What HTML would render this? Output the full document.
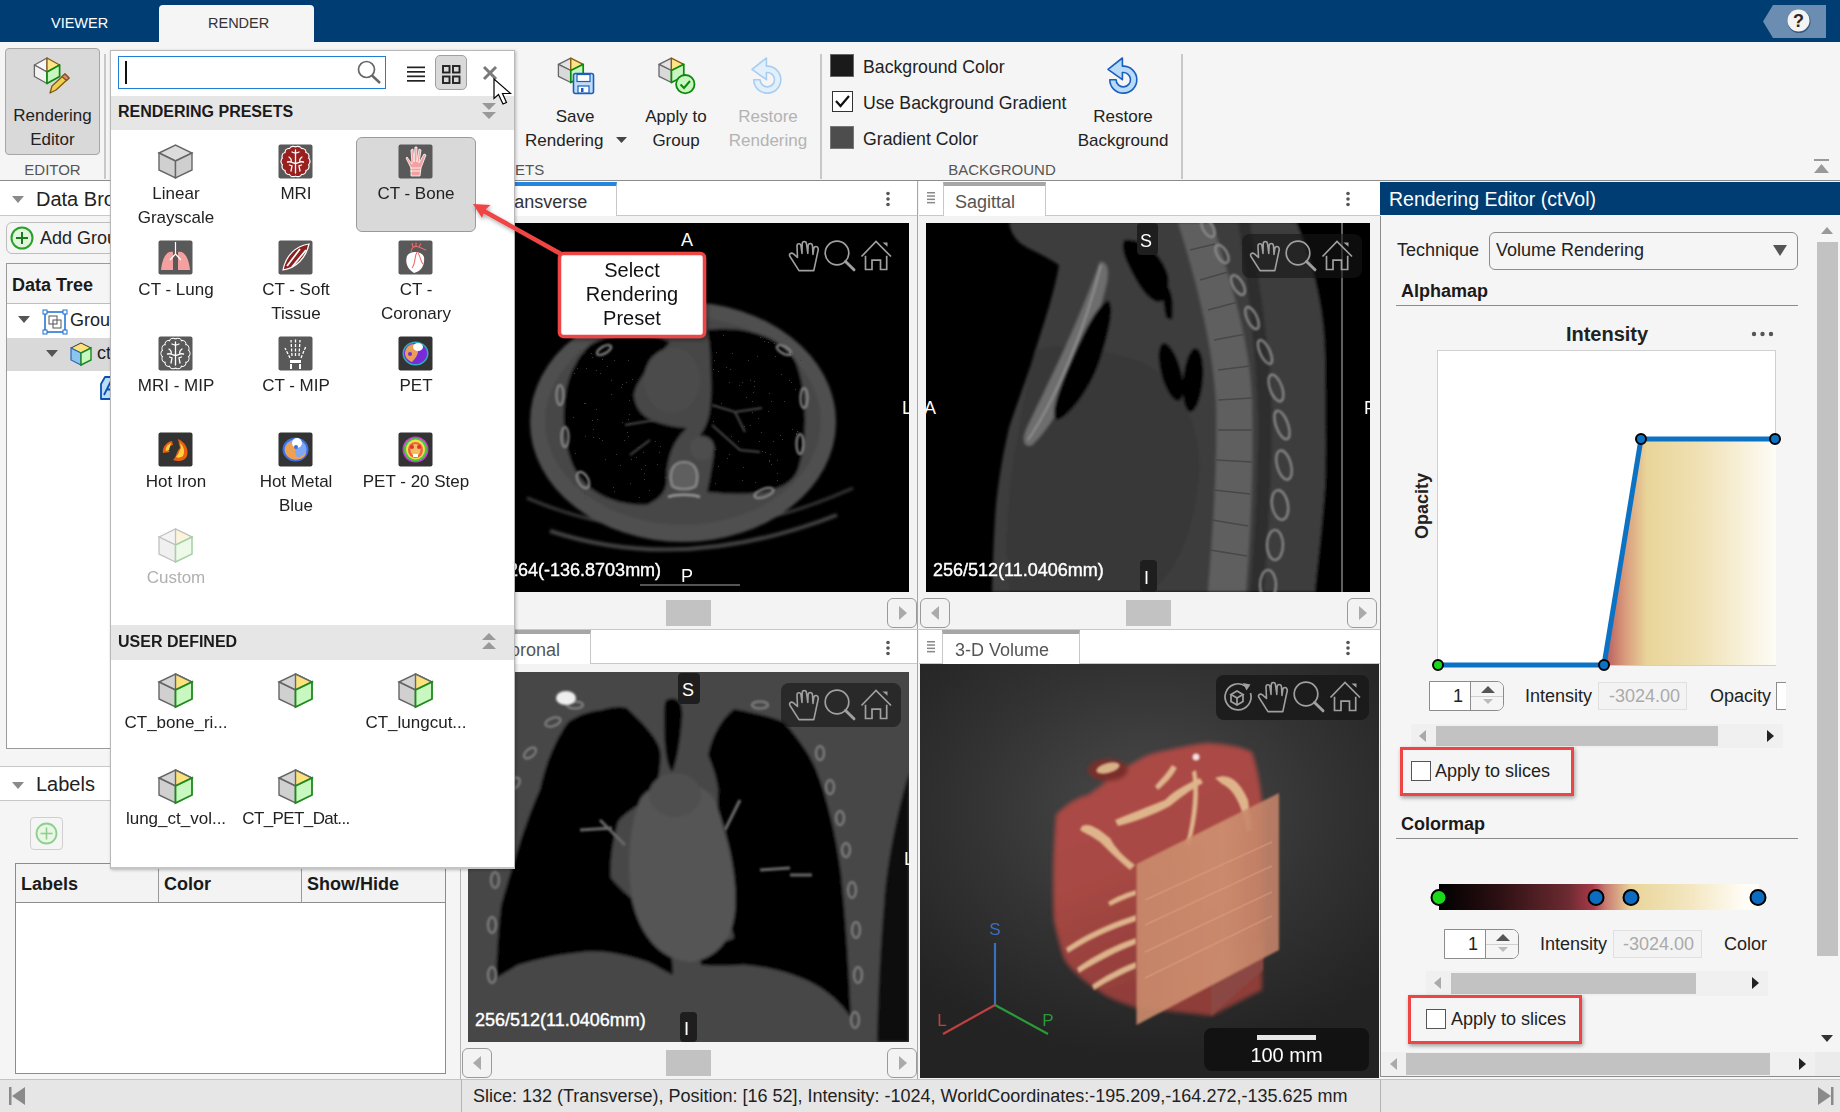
<!DOCTYPE html>
<html><head><meta charset="utf-8">
<style>
*{box-sizing:border-box;margin:0;padding:0}
html,body{width:1840px;height:1112px;overflow:hidden;background:#f5f5f5;font-family:"Liberation Sans",sans-serif;color:#1f1f1f}
.a{position:absolute}
.t{position:absolute;white-space:nowrap;line-height:1}
svg{position:absolute;overflow:visible}
</style></head><body>

<!-- ===== top navy bar ===== -->
<div class="a" style="left:0;top:0;width:1840px;height:42px;background:#003d73"></div>
<div class="t" style="left:51px;top:16px;font-size:14.5px;color:#fff">VIEWER</div>
<div class="a" style="left:159px;top:5px;width:155px;height:37px;background:#f5f5f5;border-radius:4px 4px 0 0"></div>
<div class="t" style="left:208px;top:16px;font-size:14.5px;color:#333">RENDER</div>
<!-- help -->
<svg style="left:1763px;top:5px" width="64" height="33"><polygon points="10,0 63,0 63,33 10,33 0,16.5" fill="#6b8db1"/><circle cx="36" cy="16.5" r="11.5" fill="#3a5a80"/><circle cx="35.5" cy="15.5" r="11" fill="#f4f4f4"/><text x="35.5" y="22" font-size="18" font-weight="bold" text-anchor="middle" fill="#2a2a2a" font-family="Liberation Sans">?</text></svg>

<!-- ===== toolstrip ===== -->
<div class="a" style="left:0;top:42px;width:1840px;height:139px;background:#f5f5f5;border-bottom:1px solid #8c8c8c"></div>


<!-- Rendering Editor button -->
<div class="a" style="left:5px;top:48px;width:95px;height:107px;background:#d9d9d9;border:1px solid #a6a6a6;border-radius:4px"></div>
<svg style="left:0;top:0" width="1840" height="180"><polygon points="47.0,58.0 34.4,65.0 47.0,72.0" fill="#f7f7f7" stroke="#666" stroke-width="1.3" stroke-linejoin="round"/><polygon points="47.0,58.0 59.6,65.0 47.0,72.0" fill="#fde68a" stroke="#8a5a10" stroke-width="1.3" stroke-linejoin="round"/><polygon points="34.4,65.0 47.0,72.0 47.0,83.5 34.4,76.5" fill="#f3f3f3" stroke="#666" stroke-width="1.3" stroke-linejoin="round"/><polygon points="47.0,72.0 59.6,65.0 59.6,76.5 47.0,83.5" fill="#c8f5c0" stroke="#0a8a0a" stroke-width="1.7000000000000002" stroke-linejoin="round"/><g stroke="#7a5a10" stroke-width="1.3" stroke-linejoin="round"><polygon points="50,93 52,86 65,74 69,78 56,90" fill="#f2cf50"/><polygon points="62,76.5 65,74 69,78 66.5,80.5" fill="#f08090"/></g><polygon points="570.8,58.1 558.4,64.3 570.8,70.5" fill="#e3e3e3" stroke="#666" stroke-width="1.3" stroke-linejoin="round"/><polygon points="570.8,58.1 583.2,64.3 570.8,70.5" fill="#fde68a" stroke="#8a5a10" stroke-width="1.3" stroke-linejoin="round"/><polygon points="558.4,64.3 570.8,70.5 570.8,82.5 558.4,76.3" fill="#d9d9d9" stroke="#666" stroke-width="1.3" stroke-linejoin="round"/><polygon points="570.8,70.5 583.2,64.3 583.2,76.3 570.8,82.5" fill="#c8f5c0" stroke="#0a8a0a" stroke-width="1.7000000000000002" stroke-linejoin="round"/><g><rect x="573.5" y="73.5" width="20" height="20" rx="2" fill="#c0dcf8" stroke="#1a5fbf" stroke-width="1.6"/><rect x="577" y="74.5" width="13" height="7" fill="#fff" stroke="#1a5fbf" stroke-width="1.2"/><rect x="578" y="86" width="11" height="7" fill="#fff" stroke="#1a5fbf" stroke-width="1.2"/><rect x="581" y="88" width="2.5" height="4" fill="#1a5fbf"/></g><polygon points="671.4,58.1 659.0,64.3 671.4,70.5" fill="#e3e3e3" stroke="#666" stroke-width="1.3" stroke-linejoin="round"/><polygon points="671.4,58.1 683.8,64.3 671.4,70.5" fill="#fde68a" stroke="#8a5a10" stroke-width="1.3" stroke-linejoin="round"/><polygon points="659.0,64.3 671.4,70.5 671.4,82.5 659.0,76.3" fill="#d9d9d9" stroke="#666" stroke-width="1.3" stroke-linejoin="round"/><polygon points="671.4,70.5 683.8,64.3 683.8,76.3 671.4,82.5" fill="#c8f5c0" stroke="#0a8a0a" stroke-width="1.7000000000000002" stroke-linejoin="round"/><circle cx="685.3" cy="84.2" r="9.2" fill="#c8f5c0" stroke="#0a8a0a" stroke-width="1.8"/><polyline points="680.5,84.5 684,88 690,81" fill="none" stroke="#0a8a0a" stroke-width="2"/><path transform="translate(739,50)" d="M14.8,29.7 A13.5,13.5 0 1 0 27.4,16.2 L27.4,8 L13,19.3 L27.4,29.7 L27.4,22.5 A7.2,7.2 0 1 1 21.1,29.7 Z" fill="#e2f0fc" stroke="#a8cdf0" stroke-width="1.6" stroke-linejoin="round"/><path transform="translate(1095,50)" d="M14.8,29.7 A13.5,13.5 0 1 0 27.4,16.2 L27.4,8 L13,19.3 L27.4,29.7 L27.4,22.5 A7.2,7.2 0 1 1 21.1,29.7 Z" fill="#b8dcf8" stroke="#1a5fbf" stroke-width="1.6" stroke-linejoin="round"/></svg>
<div class="t" style="left:0;top:107px;width:105px;text-align:center;font-size:17px;color:#222">Rendering</div>
<div class="t" style="left:0;top:131px;width:105px;text-align:center;font-size:17px;color:#222">Editor</div>
<div class="t" style="left:0;top:162px;width:105px;text-align:center;font-size:15px;color:#555">EDITOR</div>
<div class="a" style="left:104px;top:54px;width:2px;height:125px;background:#c8c8c8"></div>

<div class="t" style="left:515px;top:162px;font-size:15px;color:#555">ETS</div>

<!-- Save Rendering -->

<div class="t" style="left:535px;top:108px;width:80px;text-align:center;font-size:17px;color:#222">Save</div>
<div class="t" style="left:525px;top:132px;font-size:17px;color:#222">Rendering</div>
<svg style="left:616px;top:137px" width="12" height="8"><polygon points="0,0 11,0 5.5,6" fill="#444"/></svg>

<!-- Apply to Group -->

<div class="t" style="left:636px;top:108px;width:80px;text-align:center;font-size:17px;color:#222">Apply to</div>
<div class="t" style="left:636px;top:132px;width:80px;text-align:center;font-size:17px;color:#222">Group</div>

<!-- Restore Rendering disabled -->

<div class="t" style="left:718px;top:108px;width:100px;text-align:center;font-size:17px;color:#b3b3b3">Restore</div>
<div class="t" style="left:718px;top:132px;width:100px;text-align:center;font-size:17px;color:#b3b3b3">Rendering</div>

<div class="a" style="left:820px;top:54px;width:2px;height:125px;background:#c8c8c8"></div>

<!-- Background -->
<div class="a" style="left:830px;top:54px;width:24px;height:23px;background:#1a1a1a;border:1px solid #666"></div>
<div class="t" style="left:863px;top:59px;font-size:17.7px;color:#222">Background Color</div>
<div class="a" style="left:832px;top:91px;width:21px;height:21px;background:#fff;border:1px solid #333"></div>
<svg style="left:832px;top:91px" width="21" height="21"><polyline points="4,10 8.5,15 17,5" fill="none" stroke="#111" stroke-width="2.2"/></svg>
<div class="t" style="left:863px;top:95px;font-size:17.7px;color:#222">Use Background Gradient</div>
<div class="a" style="left:830px;top:126px;width:24px;height:23px;background:#4d4d4d;border:1px solid #777"></div>
<div class="t" style="left:863px;top:131px;font-size:17.7px;color:#222">Gradient Color</div>

<div class="t" style="left:1073px;top:108px;width:100px;text-align:center;font-size:17px;color:#222">Restore</div>
<div class="t" style="left:1063px;top:132px;width:120px;text-align:center;font-size:17px;color:#222">Background</div>
<div class="t" style="left:902px;top:162px;width:200px;text-align:center;font-size:15px;color:#555">BACKGROUND</div>
<div class="a" style="left:1181px;top:54px;width:2px;height:125px;background:#c8c8c8"></div>
<svg style="left:1812px;top:159px" width="20" height="16"><rect x="2" y="0" width="15" height="2" fill="#999"/><polygon points="2,14 17,14 9.5,5" fill="#999"/></svg>


<!-- ===== left panel ===== -->
<div class="a" style="left:0;top:181px;width:461px;height:898px;background:#f5f5f5;border-right:1px solid #b4b4b4"></div>
<div class="a" style="left:0;top:181px;width:461px;height:35px;background:#fff;border-bottom:1px solid #c8c8c8"></div>
<svg style="left:12px;top:196px" width="14" height="9"><polygon points="0,0 12,0 6,7" fill="#8a8a8a"/></svg>
<div class="t" style="left:36px;top:189px;font-size:20px;color:#222">Data Browser</div>
<div class="a" style="left:6px;top:222px;width:120px;height:32px;background:#f5f5f5;border:1px solid #bdbdbd;border-radius:6px"></div>
<svg style="left:10px;top:226px" width="24" height="24"><circle cx="12" cy="12" r="10.5" fill="#dff5dc" stroke="#2aa02a" stroke-width="2"/><rect x="6" y="11" width="12" height="2" fill="#1a7a1a"/><rect x="11" y="6" width="2" height="12" fill="#1a7a1a"/></svg>
<div class="t" style="left:40px;top:229px;font-size:18px;color:#222">Add Group</div>
<!-- data tree -->
<div class="a" style="left:6px;top:263px;width:440px;height:486px;background:#fff;border:1px solid #9a9a9a"></div>
<div class="a" style="left:7px;top:264px;width:438px;height:40px;background:#f5f5f5;border-bottom:1px solid #bdbdbd"></div>
<div class="t" style="left:12px;top:276px;font-size:18px;font-weight:bold;color:#1a1a1a">Data Tree</div>
<svg style="left:18px;top:316px" width="14" height="9"><polygon points="0,0 12,0 6,7" fill="#555"/></svg>
<svg style="left:43px;top:310px" width="24" height="24"><rect x="2" y="2" width="20" height="20" fill="none" stroke="#1a6fd0" stroke-width="1.5"/><rect x="0" y="0" width="4" height="4" fill="#fff" stroke="#1a6fd0"/><rect x="20" y="0" width="4" height="4" fill="#fff" stroke="#1a6fd0"/><rect x="0" y="20" width="4" height="4" fill="#fff" stroke="#1a6fd0"/><rect x="20" y="20" width="4" height="4" fill="#fff" stroke="#1a6fd0"/><rect x="6" y="6" width="8" height="8" fill="none" stroke="#555"/><rect x="10" y="10" width="8" height="8" fill="none" stroke="#555"/></svg>
<div class="t" style="left:70px;top:311px;font-size:18px;color:#222">Group</div>
<div class="a" style="left:7px;top:338px;width:438px;height:33px;background:#d9d9d9"></div>
<svg style="left:46px;top:350px" width="14" height="9"><polygon points="0,0 12,0 6,7" fill="#555"/></svg>
<svg style="left:69px;top:342px" width="24" height="24" viewBox="0 0 24 24"><polygon points="2,6 12,1 22,6 12,11" fill="#fbe27a" stroke="#333" stroke-width="1"/><polygon points="2,6 12,11 12,23 2,18" fill="#8cc4f0" stroke="#2a6ab0" stroke-width="1.2"/><polygon points="12,11 22,6 22,18 12,23" fill="#c8f7c0" stroke="#1a8a1a" stroke-width="1.4"/></svg>
<div class="t" style="left:97px;top:344px;font-size:18px;color:#222">ctVol</div>
<svg style="left:100px;top:376px" width="26" height="25"><polygon points="1,8 5,1 25,1 25,23 1,23" fill="#bcdcfa" stroke="#0a50b0" stroke-width="1.8" stroke-linejoin="round"/><path d="M4,19 L11,5 L13,5 L19,19 M7.5,13.5 L16,13.5" fill="none" stroke="#0a50b0" stroke-width="1.8"/></svg>
<!-- labels -->
<div class="a" style="left:0;top:766px;width:461px;height:35px;background:#fff;border-top:1px solid #c8c8c8;border-bottom:1px solid #c8c8c8"></div>
<svg style="left:12px;top:782px" width="14" height="9"><polygon points="0,0 12,0 6,7" fill="#8a8a8a"/></svg>
<div class="t" style="left:36px;top:774px;font-size:20px;color:#222">Labels</div>
<div class="a" style="left:30px;top:817px;width:33px;height:33px;background:#f5f5f5;border:1px solid #cfcfcf;border-radius:4px"></div>
<svg style="left:34px;top:821px" width="25" height="25"><circle cx="12.5" cy="12.5" r="10" fill="#e8f6e6" stroke="#8fce8f" stroke-width="1.8"/><rect x="6.5" y="11.7" width="12" height="1.6" fill="#8fce8f"/><rect x="11.7" y="6.5" width="1.6" height="12" fill="#8fce8f"/></svg>
<div class="a" style="left:15px;top:863px;width:431px;height:211px;background:#fff;border:1px solid #8c8c8c"></div>
<div class="a" style="left:16px;top:864px;width:429px;height:39px;background:#f3f3f3;border-bottom:1px solid #8c8c8c"></div>
<div class="a" style="left:158px;top:864px;width:1px;height:39px;background:#9a9a9a"></div>
<div class="a" style="left:301px;top:864px;width:1px;height:39px;background:#9a9a9a"></div>
<div class="t" style="left:21px;top:875px;font-size:18px;font-weight:bold;color:#1a1a1a">Labels</div>
<div class="t" style="left:164px;top:875px;font-size:18px;font-weight:bold;color:#1a1a1a">Color</div>
<div class="t" style="left:307px;top:875px;font-size:18px;font-weight:bold;color:#1a1a1a">Show/Hide</div>

<!-- ===== status bar ===== -->
<div class="a" style="left:0;top:1079px;width:1840px;height:33px;background:#e6e6e6;border-top:1px solid #c4c4c4"></div>
<div class="a" style="left:461px;top:1079px;width:1px;height:33px;background:#b4b4b4"></div>
<div class="a" style="left:1380px;top:1079px;width:1px;height:33px;background:#b4b4b4"></div>
<svg style="left:9px;top:1087px" width="18" height="19"><rect x="0" y="0" width="2.5" height="18" fill="#8a8a8a"/><polygon points="16,0 16,18 3,9" fill="#8a8a8a"/></svg>
<svg style="left:1818px;top:1087px" width="18" height="19"><rect x="13" y="0" width="2.5" height="18" fill="#8a8a8a"/><polygon points="0,0 0,18 13,9" fill="#8a8a8a"/></svg>
<div class="t" style="left:473px;top:1087px;font-size:18px;color:#222">Slice: 132 (Transverse), Position: [16 52], Intensity: -1024, WorldCoordinates:-195.209,-164.272,-135.625 mm</div>


<!-- ===== viewers ===== -->
<div class="a" style="left:462px;top:181px;width:918px;height:898px;background:#f3f3f3"></div>
<div class="a" style="left:917px;top:181px;width:1px;height:898px;background:#a8a8a8"></div>
<div class="a" style="left:462px;top:629px;width:918px;height:1px;background:#c8c8c8"></div>

<!-- Transverse -->
<div class="a" style="left:462px;top:181px;width:455px;height:35px;background:#fff;border-bottom:1px solid #c8c8c8"></div>
<div class="a" style="left:485px;top:182px;width:132px;height:34px;background:#fff;border-left:1px solid #c8c8c8;border-right:1px solid #c8c8c8;border-top:4px solid #2385e0"></div>
<div class="t" style="left:498px;top:193px;font-size:18px;color:#333">Transverse</div>
<svg style="left:885px;top:191px" width="6" height="16"><circle cx="3" cy="2.5" r="1.8" fill="#555"/><circle cx="3" cy="8" r="1.8" fill="#555"/><circle cx="3" cy="13.5" r="1.8" fill="#555"/></svg>
<div class="a" style="left:468px;top:223px;width:441px;height:369px;background:#000;overflow:hidden">
<svg style="left:0;top:0" width="441" height="369" viewBox="468 223 441 369">
 <defs><filter id="b1" x="-20%" y="-20%" width="140%" height="140%"><feGaussianBlur stdDeviation="1.6"/></filter>
 <filter id="b2"><feGaussianBlur stdDeviation="0.8"/></filter>
 <filter id="noise" x="0" y="0" width="100%" height="100%"><feTurbulence type="fractalNoise" baseFrequency="0.9" numOctaves="1" seed="3"/><feColorMatrix values="0 0 0 0 1  0 0 0 0 1  0 0 0 0 1  0 0 0 -2.2 1.25"/></filter></defs>
 <g filter="url(#b1)">
 <path d="M527,498 Q683,565 853,488" fill="none" stroke="#3a3a3a" stroke-width="3"/>
 <path d="M550,531 Q683,575 837,515" fill="none" stroke="#444" stroke-width="4"/>
 <ellipse cx="683" cy="422" rx="153" ry="120" fill="#505050"/>
 <ellipse cx="683" cy="421" rx="138" ry="104" fill="#474747"/>
 <path d="M590,345 C615,330 650,332 670,342 C655,360 636,380 634,395 C636,412 645,424 687,428 C675,440 670,450 667,470 C667,485 668,495 647,505 C615,505 590,495 575,470 C560,440 560,390 575,365 C580,355 585,350 590,345Z" fill="#050505"/>
 <path d="M707,330 C740,325 780,335 795,360 C808,390 808,440 798,470 C790,490 760,498 707,492 C712,470 712,460 714,455 C705,445 700,440 700,435 C712,420 712,400 710,355 C710,345 708,335 707,330Z" fill="#050505"/>
 <ellipse cx="702" cy="448" rx="12" ry="12" fill="#4e4e4e"/>
 <ellipse cx="684" cy="476" rx="15" ry="15" fill="#5a5a5a"/>
 <ellipse cx="672" cy="380" rx="28" ry="32" fill="#4c4c4c"/>
 </g>
 <g fill="none" stroke="#8a8a8a" stroke-width="2.2" filter="url(#b2)">
 <ellipse cx="560" cy="395" rx="3.5" ry="10"/><ellipse cx="565" cy="437" rx="3.5" ry="10"/><ellipse cx="583" cy="480" rx="5" ry="9" transform="rotate(-30 583 480)"/>
 <ellipse cx="604" cy="350" rx="8" ry="3.5" transform="rotate(-30 604 350)"/>
 <ellipse cx="804" cy="398" rx="3.5" ry="10"/><ellipse cx="800" cy="444" rx="3.5" ry="10"/><ellipse cx="764" cy="493" rx="10" ry="4" transform="rotate(-20 764 493)"/>
 <ellipse cx="784" cy="350" rx="8" ry="3.5" transform="rotate(30 784 350)"/>
 <path d="M672,486 C668,470 674,462 684,462 C694,462 700,470 696,486 C690,490 678,490 672,486Z" fill="#5e5e5e"/>
 <path d="M668,497 C676,494 692,494 700,497" stroke="#9a9a9a" stroke-width="2.5"/>

 </g>
 <g stroke="#4a4a4a" stroke-width="2" fill="none" filter="url(#b2)"><path d="M712,405 L735,412 L762,408 M735,412 L745,432 M712,425 L740,450 L760,452"/><path d="M650,440 L630,455 M655,420 L625,425"/></g>
<rect x="777" y="460" width="1" height="1" fill="#3c3c3c"/><rect x="777" y="480" width="1" height="1" fill="#3c3c3c"/><rect x="614" y="491" width="1" height="1" fill="#3c3c3c"/><rect x="791" y="353" width="1" height="1" fill="#3c3c3c"/><rect x="593" y="429" width="1" height="1" fill="#3c3c3c"/><rect x="713" y="369" width="1" height="1" fill="#3c3c3c"/><rect x="657" y="464" width="1" height="1" fill="#3c3c3c"/><rect x="723" y="335" width="1" height="1" fill="#3c3c3c"/><rect x="730" y="369" width="1" height="1" fill="#3c3c3c"/><rect x="789" y="380" width="1" height="1" fill="#3c3c3c"/><rect x="759" y="441" width="1" height="1" fill="#3c3c3c"/><rect x="659" y="452" width="1" height="1" fill="#3c3c3c"/><rect x="791" y="382" width="1" height="1" fill="#3c3c3c"/><rect x="586" y="368" width="1" height="1" fill="#3c3c3c"/><rect x="599" y="438" width="1" height="1" fill="#3c3c3c"/><rect x="616" y="454" width="1" height="1" fill="#3c3c3c"/><rect x="786" y="338" width="1" height="1" fill="#3c3c3c"/><rect x="744" y="426" width="1" height="1" fill="#3c3c3c"/><rect x="574" y="373" width="1" height="1" fill="#3c3c3c"/><rect x="729" y="454" width="1" height="1" fill="#3c3c3c"/><rect x="795" y="389" width="1" height="1" fill="#3c3c3c"/><rect x="620" y="465" width="1" height="1" fill="#3c3c3c"/><rect x="641" y="469" width="1" height="1" fill="#3c3c3c"/><rect x="715" y="483" width="1" height="1" fill="#3c3c3c"/><rect x="602" y="440" width="1" height="1" fill="#3c3c3c"/><rect x="742" y="480" width="1" height="1" fill="#3c3c3c"/><rect x="739" y="385" width="1" height="1" fill="#3c3c3c"/><rect x="577" y="368" width="1" height="1" fill="#3c3c3c"/><rect x="800" y="360" width="1" height="1" fill="#3c3c3c"/><rect x="593" y="437" width="1" height="1" fill="#3c3c3c"/><rect x="752" y="401" width="1" height="1" fill="#3c3c3c"/><rect x="796" y="434" width="1" height="1" fill="#3c3c3c"/><rect x="721" y="403" width="1" height="1" fill="#3c3c3c"/><rect x="665" y="477" width="1" height="1" fill="#3c3c3c"/><rect x="752" y="412" width="1" height="1" fill="#3c3c3c"/><rect x="754" y="381" width="1" height="1" fill="#3c3c3c"/><rect x="584" y="403" width="1" height="1" fill="#3c3c3c"/><rect x="796" y="433" width="1" height="1" fill="#3c3c3c"/><rect x="602" y="359" width="1" height="1" fill="#3c3c3c"/><rect x="644" y="479" width="1" height="1" fill="#3c3c3c"/><rect x="645" y="465" width="1" height="1" fill="#3c3c3c"/><rect x="770" y="454" width="1" height="1" fill="#3c3c3c"/><rect x="643" y="452" width="1" height="1" fill="#3c3c3c"/><rect x="660" y="446" width="1" height="1" fill="#3c3c3c"/><rect x="713" y="421" width="1" height="1" fill="#3c3c3c"/><rect x="769" y="460" width="1" height="1" fill="#3c3c3c"/><rect x="631" y="459" width="1" height="1" fill="#3c3c3c"/><rect x="743" y="467" width="1" height="1" fill="#3c3c3c"/><rect x="773" y="488" width="1" height="1" fill="#3c3c3c"/><rect x="758" y="418" width="1" height="1" fill="#3c3c3c"/><rect x="649" y="490" width="1" height="1" fill="#3c3c3c"/><rect x="636" y="457" width="1" height="1" fill="#3c3c3c"/><rect x="727" y="458" width="1" height="1" fill="#3c3c3c"/><rect x="771" y="401" width="1" height="1" fill="#3c3c3c"/><rect x="780" y="435" width="1" height="1" fill="#3c3c3c"/><rect x="714" y="360" width="1" height="1" fill="#3c3c3c"/><rect x="632" y="379" width="1" height="1" fill="#3c3c3c"/><rect x="768" y="342" width="1" height="1" fill="#3c3c3c"/><rect x="591" y="353" width="1" height="1" fill="#3c3c3c"/><rect x="600" y="373" width="1" height="1" fill="#3c3c3c"/><rect x="573" y="417" width="1" height="1" fill="#3c3c3c"/><rect x="628" y="436" width="1" height="1" fill="#3c3c3c"/><rect x="596" y="409" width="1" height="1" fill="#3c3c3c"/><rect x="628" y="360" width="1" height="1" fill="#3c3c3c"/><rect x="742" y="426" width="1" height="1" fill="#3c3c3c"/><rect x="784" y="401" width="1" height="1" fill="#3c3c3c"/><rect x="769" y="393" width="1" height="1" fill="#3c3c3c"/><rect x="627" y="432" width="1" height="1" fill="#3c3c3c"/><rect x="797" y="431" width="1" height="1" fill="#3c3c3c"/><rect x="624" y="440" width="1" height="1" fill="#3c3c3c"/><rect x="630" y="483" width="1" height="1" fill="#3c3c3c"/><rect x="611" y="380" width="1" height="1" fill="#3c3c3c"/><rect x="792" y="429" width="1" height="1" fill="#3c3c3c"/><rect x="600" y="498" width="1" height="1" fill="#3c3c3c"/><rect x="597" y="419" width="1" height="1" fill="#3c3c3c"/><rect x="629" y="414" width="1" height="1" fill="#3c3c3c"/><rect x="644" y="473" width="1" height="1" fill="#3c3c3c"/><rect x="621" y="387" width="1" height="1" fill="#3c3c3c"/><rect x="781" y="374" width="1" height="1" fill="#3c3c3c"/><rect x="585" y="498" width="1" height="1" fill="#3c3c3c"/><rect x="628" y="419" width="1" height="1" fill="#3c3c3c"/><rect x="765" y="452" width="1" height="1" fill="#3c3c3c"/><rect x="742" y="382" width="1" height="1" fill="#3c3c3c"/><rect x="753" y="392" width="1" height="1" fill="#3c3c3c"/><rect x="764" y="341" width="1" height="1" fill="#3c3c3c"/><rect x="613" y="487" width="1" height="1" fill="#3c3c3c"/><rect x="760" y="337" width="1" height="1" fill="#3c3c3c"/><rect x="750" y="425" width="1" height="1" fill="#3c3c3c"/><rect x="768" y="411" width="1" height="1" fill="#3c3c3c"/><rect x="746" y="397" width="1" height="1" fill="#3c3c3c"/><rect x="729" y="382" width="1" height="1" fill="#3c3c3c"/><rect x="718" y="466" width="1" height="1" fill="#3c3c3c"/><rect x="750" y="380" width="1" height="1" fill="#3c3c3c"/><rect x="792" y="357" width="1" height="1" fill="#3c3c3c"/><rect x="622" y="422" width="1" height="1" fill="#3c3c3c"/><rect x="585" y="436" width="1" height="1" fill="#3c3c3c"/><rect x="718" y="371" width="1" height="1" fill="#3c3c3c"/><rect x="782" y="439" width="1" height="1" fill="#3c3c3c"/><rect x="639" y="497" width="1" height="1" fill="#3c3c3c"/><rect x="774" y="343" width="1" height="1" fill="#3c3c3c"/><rect x="731" y="436" width="1" height="1" fill="#3c3c3c"/><rect x="775" y="356" width="1" height="1" fill="#3c3c3c"/><rect x="748" y="360" width="1" height="1" fill="#3c3c3c"/><rect x="716" y="352" width="1" height="1" fill="#3c3c3c"/><rect x="577" y="354" width="1" height="1" fill="#3c3c3c"/><rect x="777" y="473" width="1" height="1" fill="#3c3c3c"/><rect x="611" y="394" width="1" height="1" fill="#3c3c3c"/><rect x="755" y="482" width="1" height="1" fill="#3c3c3c"/><rect x="575" y="453" width="1" height="1" fill="#3c3c3c"/><rect x="630" y="423" width="1" height="1" fill="#3c3c3c"/><rect x="761" y="432" width="1" height="1" fill="#3c3c3c"/><rect x="622" y="384" width="1" height="1" fill="#3c3c3c"/><rect x="757" y="356" width="1" height="1" fill="#3c3c3c"/><rect x="605" y="459" width="1" height="1" fill="#3c3c3c"/><rect x="638" y="447" width="1" height="1" fill="#3c3c3c"/><rect x="626" y="382" width="1" height="1" fill="#3c3c3c"/><rect x="754" y="386" width="1" height="1" fill="#3c3c3c"/><rect x="715" y="449" width="1" height="1" fill="#3c3c3c"/><rect x="584" y="493" width="1" height="1" fill="#3c3c3c"/><rect x="732" y="353" width="1" height="1" fill="#3c3c3c"/><rect x="771" y="464" width="1" height="1" fill="#3c3c3c"/><rect x="629" y="400" width="1" height="1" fill="#3c3c3c"/><rect x="602" y="440" width="1" height="1" fill="#3c3c3c"/><rect x="607" y="366" width="1" height="1" fill="#3c3c3c"/><rect x="769" y="461" width="1" height="1" fill="#3c3c3c"/><rect x="762" y="451" width="1" height="1" fill="#3c3c3c"/><rect x="579" y="350" width="1" height="1" fill="#3c3c3c"/><rect x="574" y="483" width="1" height="1" fill="#3c3c3c"/><rect x="655" y="441" width="1" height="1" fill="#3c3c3c"/><rect x="614" y="360" width="1" height="1" fill="#3c3c3c"/><rect x="585" y="403" width="1" height="1" fill="#3c3c3c"/><rect x="596" y="370" width="1" height="1" fill="#3c3c3c"/><rect x="592" y="420" width="1" height="1" fill="#3c3c3c"/><rect x="773" y="441" width="1" height="1" fill="#3c3c3c"/><rect x="738" y="441" width="1" height="1" fill="#3c3c3c"/><rect x="726" y="367" width="1" height="1" fill="#3c3c3c"/><rect x="592" y="357" width="1" height="1" fill="#3c3c3c"/>
 <line x1="640" y1="585" x2="740" y2="585" stroke="#555" stroke-width="2"/>
</svg>
<div class="t" style="left:213px;top:8px;font-size:18px;color:#fff">A</div>
<div class="t" style="left:213px;top:344px;font-size:18px;color:#fff">P</div>
<div class="t" style="left:434px;top:176px;font-size:18px;color:#fff">L</div>
<div class="t" style="left:5px;top:338px;font-size:18px;color:#fff;font-weight:normal;-webkit-text-stroke:0.4px #fff">256/264(-136.8703mm)</div>
</div>

<!-- Sagittal -->
<div class="a" style="left:919px;top:181px;width:461px;height:35px;background:#fff;border-bottom:1px solid #c8c8c8"></div>
<svg style="left:927px;top:192px" width="9" height="12"><rect x="0" y="0" width="8" height="1.5" fill="#888"/><rect x="0" y="3.3" width="8" height="1.5" fill="#888"/><rect x="0" y="6.6" width="8" height="1.5" fill="#888"/><rect x="0" y="9.9" width="8" height="1.5" fill="#888"/></svg>
<div class="a" style="left:943px;top:182px;width:103px;height:34px;background:#fff;border-left:1px solid #c8c8c8;border-right:1px solid #c8c8c8;border-top:4px solid #a6a6a6"></div>
<div class="t" style="left:955px;top:193px;font-size:18px;color:#555">Sagittal</div>
<svg style="left:1345px;top:191px" width="6" height="16"><circle cx="3" cy="2.5" r="1.8" fill="#555"/><circle cx="3" cy="8" r="1.8" fill="#555"/><circle cx="3" cy="13.5" r="1.8" fill="#555"/></svg>
<div class="a" style="left:926px;top:223px;width:444px;height:369px;background:#000;overflow:hidden">
<svg style="left:0;top:0" width="444" height="369" viewBox="926 223 444 369">
 <g filter="url(#b1)">
 <path d="M1009,222 L1312,222 C1320,280 1326,330 1325,372 C1326,420 1326,470 1325,488 C1322,530 1318,560 1315,592 L992,592 C993,560 994,530 996,505 C1000,470 1004,450 1009,428 C1018,400 1030,370 1036,348 C1045,320 1055,290 1059,265 C1045,255 1025,248 1019,242 C1012,235 1010,228 1009,222Z" fill="#3e3e3e"/>
 <path d="M1035,350 C1060,340 1100,350 1140,360 C1180,380 1200,420 1200,470 C1195,530 1180,570 1150,592 L1010,592 C1000,540 1010,450 1035,350Z" fill="#383838"/>
 <path d="M1100,262 C1108,262 1110,272 1105,290 C1090,350 1060,420 1032,445 C1024,448 1022,440 1026,430 C1050,380 1080,320 1100,262Z" fill="#6e6e6e"/>
 <path d="M1108,300 C1115,305 1110,330 1100,360 C1090,390 1070,415 1058,420 C1050,418 1055,400 1065,375 C1078,345 1092,310 1108,300Z" fill="#060606"/>
 <path d="M1124,240 C1140,238 1160,250 1168,275 C1170,290 1166,302 1158,302 C1146,300 1135,280 1126,260 C1122,250 1122,244 1124,240Z" fill="#060606"/>
 <path d="M1165,285 C1170,285 1175,300 1172,320 L1166,318 C1163,305 1162,290 1165,285Z" fill="#060606"/>
 <ellipse cx="1171" cy="372" rx="10" ry="30" fill="#060606" transform="rotate(-15 1171 372)"/>
 <ellipse cx="1193" cy="380" rx="10" ry="32" fill="#060606" transform="rotate(5 1193 380)"/>
 <path d="M1178,222 L1212,222 C1230,280 1250,340 1252,400 C1254,470 1250,540 1246,592 L1208,592 C1212,540 1218,470 1216,400 C1212,340 1196,280 1178,222Z" fill="#5e5e5e"/>
 <path d="M1238,222 L1250,222 C1262,300 1272,360 1272,420 C1272,480 1268,540 1264,592 L1250,592 C1254,540 1258,480 1258,420 C1256,360 1250,300 1238,222Z" fill="#2e2e2e"/>
 <path d="M1296,222 L1345,222 L1345,592 L1315,592 C1318,560 1322,530 1325,488 C1326,470 1326,420 1325,372 C1326,330 1320,280 1296,222Z" fill="#030303"/>
 </g>
 <g fill="none" stroke="#8e8e8e" stroke-width="2.2" filter="url(#b2)">
 <path d="M1101,265 C1085,330 1055,400 1028,440"/>
 <ellipse cx="1208" cy="228" rx="5" ry="10" transform="rotate(-30 1208 228)"/><ellipse cx="1222" cy="254" rx="5" ry="10" transform="rotate(-30 1222 254)"/><ellipse cx="1238" cy="285" rx="5" ry="11" transform="rotate(-30 1238 285)"/><ellipse cx="1252" cy="318" rx="5" ry="12" transform="rotate(-25 1252 318)"/><ellipse cx="1265" cy="352" rx="5" ry="13" transform="rotate(-25 1265 352)"/><ellipse cx="1276" cy="388" rx="6" ry="14" transform="rotate(-20 1276 388)"/><ellipse cx="1282" cy="425" rx="6" ry="15" transform="rotate(-20 1282 425)"/><ellipse cx="1284" cy="465" rx="7" ry="15" transform="rotate(-15 1284 465)"/><ellipse cx="1280" cy="505" rx="8" ry="15" transform="rotate(-10 1280 505)"/><ellipse cx="1275" cy="545" rx="8" ry="15"/><ellipse cx="1268" cy="585" rx="8" ry="15"/>
 </g>
 <g stroke="#484848" stroke-width="1.5"><path d="M1190,250 L1215,244 M1200,280 L1228,272 M1208,310 L1238,302 M1214,340 L1246,334 M1218,370 L1250,366 M1218,400 L1252,398 M1218,430 L1252,430 M1216,460 L1252,462 M1214,490 L1250,494 M1212,520 L1248,526 M1210,550 L1247,556"/></g>
 <path d="M1342,223 L1342,592" stroke="#606060" stroke-width="2"/>
</svg>
<div class="a" style="left:211px;top:0;width:21px;height:32px;background:#1e1e1e;border-radius:4px"></div>
<div class="t" style="left:214px;top:9px;font-size:18px;color:#fff">S</div>
<div class="a" style="left:214px;top:337px;width:17px;height:32px;background:#1e1e1e;border-radius:4px"></div>
<div class="t" style="left:218px;top:346px;font-size:18px;color:#fff">I</div>
<div class="t" style="left:-2px;top:176px;font-size:18px;color:#fff">A</div>
<div class="t" style="left:438px;top:176px;font-size:18px;color:#fff">P</div>
<div class="t" style="left:7px;top:338px;font-size:18px;color:#fff;font-weight:normal;-webkit-text-stroke:0.4px #fff">256/512(11.0406mm)</div>
</div>

<!-- Coronal -->
<div class="a" style="left:462px;top:630px;width:455px;height:34px;background:#fff;border-bottom:1px solid #c8c8c8"></div>
<div class="a" style="left:485px;top:630px;width:106px;height:34px;background:#fff;border-left:1px solid #c8c8c8;border-right:1px solid #c8c8c8;border-top:4px solid #a6a6a6"></div>
<div class="t" style="left:497px;top:641px;font-size:18px;color:#555">Coronal</div>
<svg style="left:885px;top:640px" width="6" height="16"><circle cx="3" cy="2.5" r="1.8" fill="#555"/><circle cx="3" cy="8" r="1.8" fill="#555"/><circle cx="3" cy="13.5" r="1.8" fill="#555"/></svg>
<div class="a" style="left:468px;top:672px;width:441px;height:370px;background:#444;overflow:hidden">
<svg style="left:0;top:0" width="441" height="370" viewBox="468 672 441 370">
 <g filter="url(#b1)">
 <rect x="468" y="672" width="441" height="370" fill="#474747"/>
 <path d="M909,772 C895,820 886,870 884,905 C880,950 878,1000 877,1042 L909,1042Z" fill="#070707"/>
 <path d="M601,710 C615,706 625,706 628,709 C645,725 660,740 661,755 C660,775 657,785 654,795 C640,805 625,812 618,822 C612,845 610,862 611,878 C630,900 655,915 668,938 C672,955 673,965 673,975 C662,970 655,965 648,962 C625,955 605,950 584,952 C555,955 535,960 518,965 C510,970 502,975 496,978 C497,950 498,930 501,905 C514,860 526,820 540,789 C545,765 555,740 568,722 C580,714 590,711 601,710Z" fill="#040404"/>
 <path d="M734,709 C750,712 770,716 784,722 C800,740 812,758 817,772 C828,800 836,835 841,872 C846,920 849,970 851,1018 C840,1000 820,985 801,978 C780,970 760,966 744,965 C725,966 710,966 701,965 C700,960 700,955 701,952 C712,945 725,942 734,938 C728,915 723,895 721,878 C718,850 717,820 718,789 C716,775 712,765 708,755 C712,735 722,718 734,709Z" fill="#040404"/>
 <path d="M666,700 C676,696 684,700 682,720 C680,745 676,765 672,772 C666,765 664,745 664,720 C664,710 664,704 666,700Z" fill="#040404"/>
 <path d="M640,800 C650,780 700,775 715,800 C725,830 738,870 735,910 C733,940 715,960 690,962 C660,960 640,935 632,900 C626,860 630,825 640,800Z" fill="#545454"/>
 <ellipse cx="675" cy="795" rx="26" ry="22" fill="#505050"/>
 </g>
 <g fill="none" stroke="#858585" stroke-width="2" filter="url(#b2)">
 <ellipse cx="575" cy="705" rx="8" ry="3.5"/><ellipse cx="553" cy="722" rx="8" ry="4" transform="rotate(-20 553 722)"/><ellipse cx="530" cy="753" rx="7" ry="4" transform="rotate(-40 530 753)"/><ellipse cx="515" cy="783" rx="6" ry="4" transform="rotate(-55 515 783)"/><ellipse cx="505" cy="815" rx="4" ry="7"/><ellipse cx="500" cy="845" rx="4" ry="7"/><ellipse cx="495" cy="880" rx="4" ry="8"/><ellipse cx="492" cy="925" rx="4" ry="8"/><ellipse cx="492" cy="975" rx="4" ry="8"/>
 <ellipse cx="760" cy="705" rx="8" ry="3.5"/><ellipse cx="820" cy="753" rx="4" ry="7"/><ellipse cx="830" cy="787" rx="4" ry="7"/><ellipse cx="840" cy="818" rx="4" ry="7"/><ellipse cx="846" cy="850" rx="4" ry="7"/><ellipse cx="852" cy="890" rx="4" ry="8"/><ellipse cx="856" cy="930" rx="4" ry="8"/><ellipse cx="858" cy="975" rx="4" ry="8"/><ellipse cx="855" cy="1020" rx="4" ry="8"/>
 </g>
 <g stroke="#6a6a6a" stroke-width="3" fill="none" filter="url(#b2)"><path d="M580,830 L612,828 M600,820 L625,845 M740,800 L725,830 M760,870 L790,868 M790,875 L812,875"/></g>
 <ellipse cx="566" cy="698" rx="10" ry="7" fill="#eee" filter="url(#b2)"/>
</svg>
<div class="a" style="left:210px;top:1px;width:22px;height:31px;background:#1e1e1e;border-radius:4px"></div>
<div class="t" style="left:214px;top:9px;font-size:18px;color:#fff">S</div>
<div class="a" style="left:212px;top:340px;width:17px;height:30px;background:#1e1e1e;border-radius:4px"></div>
<div class="t" style="left:216px;top:348px;font-size:18px;color:#fff">I</div>
<div class="t" style="left:436px;top:178px;font-size:18px;color:#fff">L</div>
<div class="t" style="left:7px;top:339px;font-size:18px;color:#fff;font-weight:normal;-webkit-text-stroke:0.4px #fff">256/512(11.0406mm)</div>
</div>

<!-- 3D volume -->
<div class="a" style="left:919px;top:630px;width:461px;height:34px;background:#fff;border-bottom:1px solid #c8c8c8"></div>
<svg style="left:927px;top:641px" width="9" height="12"><rect x="0" y="0" width="8" height="1.5" fill="#888"/><rect x="0" y="3.3" width="8" height="1.5" fill="#888"/><rect x="0" y="6.6" width="8" height="1.5" fill="#888"/><rect x="0" y="9.9" width="8" height="1.5" fill="#888"/></svg>
<div class="a" style="left:942px;top:630px;width:138px;height:34px;background:#fff;border-left:1px solid #c8c8c8;border-right:1px solid #c8c8c8;border-top:4px solid #a6a6a6"></div>
<div class="t" style="left:955px;top:641px;font-size:18px;color:#555">3-D Volume</div>
<svg style="left:1345px;top:640px" width="6" height="16"><circle cx="3" cy="2.5" r="1.8" fill="#555"/><circle cx="3" cy="8" r="1.8" fill="#555"/><circle cx="3" cy="13.5" r="1.8" fill="#555"/></svg>
<div class="a" style="left:920px;top:664px;width:459px;height:414px;background:radial-gradient(ellipse 70% 60% at 50% 35%,#4a4a4a 0%,#333 55%,#232323 100%);overflow:hidden"></div>

<svg style="left:789px;top:241px" width="108" height="31"><g transform="translate(0,0)"><path d="M10,29.6 L24.8,29.6 L29.3,8.5 Q29,5.5 27,5.5 Q25,5.5 24.7,8 L24,13.5 L23.5,5 Q23.2,2.5 21.3,2.5 Q19.3,2.5 19.1,5 L18.8,12.5 L17.5,3 Q17.3,0.5 15.3,0.5 Q13.3,0.5 13.2,3 L13,12.5 L12,5 Q11.8,2.8 9.9,2.8 Q8,2.8 8,5 L8.5,16.5 L4.5,12.8 Q2.5,11.5 1,12.8 Q0,14 1,15.5 Z" fill="none" stroke="#a0a0a0" stroke-width="1.6" stroke-linejoin="round"/></g><g transform="translate(36,0)"><circle cx="12" cy="12" r="11.8" fill="none" stroke="#a0a0a0" stroke-width="1.7"/><line x1="20.5" y1="20.5" x2="29" y2="28.8" stroke="#a0a0a0" stroke-width="3" stroke-linecap="round"/></g><g transform="translate(72,0)"><polyline points="0.5,15.5 15,0.5 30,15.5" fill="none" stroke="#a0a0a0" stroke-width="1.7"/><polyline points="4.5,14.7 4.5,28.5 11,28.5 11,19.2 19.5,19.2 19.5,28.5 25.7,28.5 25.7,14.7" fill="none" stroke="#a0a0a0" stroke-width="1.7"/><polygon points="21.5,1.6 26.5,1.6 26.5,5.8" fill="#a0a0a0"/></g></svg><div class="a" style="left:1242px;top:234px;width:120px;height:44px;background:rgba(22,22,22,0.6);border-radius:8px"></div><svg style="left:1250px;top:241px" width="108" height="31"><g transform="translate(0,0)"><path d="M10,29.6 L24.8,29.6 L29.3,8.5 Q29,5.5 27,5.5 Q25,5.5 24.7,8 L24,13.5 L23.5,5 Q23.2,2.5 21.3,2.5 Q19.3,2.5 19.1,5 L18.8,12.5 L17.5,3 Q17.3,0.5 15.3,0.5 Q13.3,0.5 13.2,3 L13,12.5 L12,5 Q11.8,2.8 9.9,2.8 Q8,2.8 8,5 L8.5,16.5 L4.5,12.8 Q2.5,11.5 1,12.8 Q0,14 1,15.5 Z" fill="none" stroke="#a0a0a0" stroke-width="1.6" stroke-linejoin="round"/></g><g transform="translate(36,0)"><circle cx="12" cy="12" r="11.8" fill="none" stroke="#a0a0a0" stroke-width="1.7"/><line x1="20.5" y1="20.5" x2="29" y2="28.8" stroke="#a0a0a0" stroke-width="3" stroke-linecap="round"/></g><g transform="translate(72,0)"><polyline points="0.5,15.5 15,0.5 30,15.5" fill="none" stroke="#a0a0a0" stroke-width="1.7"/><polyline points="4.5,14.7 4.5,28.5 11,28.5 11,19.2 19.5,19.2 19.5,28.5 25.7,28.5 25.7,14.7" fill="none" stroke="#a0a0a0" stroke-width="1.7"/><polygon points="21.5,1.6 26.5,1.6 26.5,5.8" fill="#a0a0a0"/></g></svg><div class="a" style="left:781px;top:683px;width:120px;height:44px;background:rgba(22,22,22,0.6);border-radius:8px"></div><svg style="left:789px;top:690px" width="108" height="31"><g transform="translate(0,0)"><path d="M10,29.6 L24.8,29.6 L29.3,8.5 Q29,5.5 27,5.5 Q25,5.5 24.7,8 L24,13.5 L23.5,5 Q23.2,2.5 21.3,2.5 Q19.3,2.5 19.1,5 L18.8,12.5 L17.5,3 Q17.3,0.5 15.3,0.5 Q13.3,0.5 13.2,3 L13,12.5 L12,5 Q11.8,2.8 9.9,2.8 Q8,2.8 8,5 L8.5,16.5 L4.5,12.8 Q2.5,11.5 1,12.8 Q0,14 1,15.5 Z" fill="none" stroke="#a0a0a0" stroke-width="1.6" stroke-linejoin="round"/></g><g transform="translate(36,0)"><circle cx="12" cy="12" r="11.8" fill="none" stroke="#a0a0a0" stroke-width="1.7"/><line x1="20.5" y1="20.5" x2="29" y2="28.8" stroke="#a0a0a0" stroke-width="3" stroke-linecap="round"/></g><g transform="translate(72,0)"><polyline points="0.5,15.5 15,0.5 30,15.5" fill="none" stroke="#a0a0a0" stroke-width="1.7"/><polyline points="4.5,14.7 4.5,28.5 11,28.5 11,19.2 19.5,19.2 19.5,28.5 25.7,28.5 25.7,14.7" fill="none" stroke="#a0a0a0" stroke-width="1.7"/><polygon points="21.5,1.6 26.5,1.6 26.5,5.8" fill="#a0a0a0"/></g></svg><div class="a" style="left:462px;top:598px;width:30px;height:30px;border:1px solid #9a9a9a;border-radius:6px;background:#f3f3f3"></div><svg style="left:472px;top:606px" width="10" height="14"><polygon points="9,0 9,14 1,7" fill="#aaa"/></svg><div class="a" style="left:887px;top:598px;width:30px;height:30px;border:1px solid #9a9a9a;border-radius:6px;background:#f3f3f3"></div><svg style="left:898px;top:606px" width="10" height="14"><polygon points="1,0 1,14 9,7" fill="#aaa"/></svg><div class="a" style="left:666px;top:600px;width:45px;height:26px;background:#c2c2c2"></div><div class="a" style="left:920px;top:598px;width:30px;height:30px;border:1px solid #9a9a9a;border-radius:6px;background:#f3f3f3"></div><svg style="left:930px;top:606px" width="10" height="14"><polygon points="9,0 9,14 1,7" fill="#aaa"/></svg><div class="a" style="left:1347px;top:598px;width:30px;height:30px;border:1px solid #9a9a9a;border-radius:6px;background:#f3f3f3"></div><svg style="left:1358px;top:606px" width="10" height="14"><polygon points="1,0 1,14 9,7" fill="#aaa"/></svg><div class="a" style="left:1126px;top:600px;width:45px;height:26px;background:#c2c2c2"></div><div class="a" style="left:462px;top:1048px;width:30px;height:30px;border:1px solid #9a9a9a;border-radius:6px;background:#f3f3f3"></div><svg style="left:472px;top:1056px" width="10" height="14"><polygon points="9,0 9,14 1,7" fill="#aaa"/></svg><div class="a" style="left:887px;top:1048px;width:30px;height:30px;border:1px solid #9a9a9a;border-radius:6px;background:#f3f3f3"></div><svg style="left:898px;top:1056px" width="10" height="14"><polygon points="1,0 1,14 9,7" fill="#aaa"/></svg><div class="a" style="left:666px;top:1050px;width:45px;height:26px;background:#c2c2c2"></div>

<!-- ===== right panel ===== -->
<div class="a" style="left:1380px;top:181px;width:460px;height:898px;background:#f5f5f5"></div>
<div class="a" style="left:1380px;top:182px;width:460px;height:33px;background:#003d73"></div>
<div class="t" style="left:1389px;top:190px;font-size:19.5px;color:#fff">Rendering Editor (ctVol)</div>
<div class="a" style="left:1380px;top:216px;width:460px;height:861px;border-left:1px solid #8c8c8c;border-bottom:1px solid #8c8c8c"></div>
<!-- v scroll -->
<svg style="left:1820px;top:226px" width="14" height="9"><polygon points="1,8 13,8 7,1" fill="#999"/></svg>
<div class="a" style="left:1817px;top:242px;width:21px;height:714px;background:#c2c2c2"></div>
<svg style="left:1820px;top:1034px" width="14" height="9"><polygon points="1,1 13,1 7,8" fill="#333"/></svg>
<!-- technique -->
<div class="t" style="left:1397px;top:241px;font-size:18px;color:#222">Technique</div>
<div class="a" style="left:1489px;top:232px;width:309px;height:38px;background:#f5f5f5;border:1px solid #8c8c8c;border-radius:6px"></div>
<div class="t" style="left:1496px;top:241px;font-size:18px;color:#222">Volume Rendering</div>
<svg style="left:1773px;top:245px" width="15" height="12"><polygon points="0,0 14,0 7,11" fill="#555"/></svg>
<div class="t" style="left:1401px;top:282px;font-size:18px;font-weight:bold;color:#1a1a1a">Alphamap</div>
<div class="a" style="left:1396px;top:305px;width:402px;height:1px;background:#8c8c8c"></div>
<div class="t" style="left:1380px;top:324px;width:454px;text-align:center;font-size:20px;font-weight:bold;color:#222">Intensity</div>
<svg style="left:1751px;top:331px" width="24" height="6"><circle cx="3" cy="3" r="2.2" fill="#555"/><circle cx="11.5" cy="3" r="2.2" fill="#555"/><circle cx="20" cy="3" r="2.2" fill="#555"/></svg>
<div class="t" style="left:1409px;top:497px;font-size:18px;font-weight:bold;color:#222;transform:rotate(-90deg);transform-origin:center;width:70px;text-align:center;left:1387px">Opacity</div>
<!-- plot -->
<svg style="left:1430px;top:345px" width="360" height="330" viewBox="1430 345 360 330">
 <defs>
  <linearGradient id="fillg" x1="1604" y1="0" x2="1776" y2="0" gradientUnits="userSpaceOnUse">
   <stop offset="0" stop-color="#b5585a"/><stop offset="0.12" stop-color="#d99a7c"/><stop offset="0.25" stop-color="#e9d59a"/><stop offset="0.55" stop-color="#f0e1b4"/><stop offset="1" stop-color="#fdfcf6"/>
  </linearGradient>
 </defs>
 <rect x="1437.5" y="350.5" width="338" height="315" fill="#fff" stroke="#d0d0d0" stroke-width="1"/>
 <polygon points="1604,665 1641,439 1776,439 1776,665" fill="url(#fillg)"/>
 <polyline points="1438,665 1604,665 1641,439 1775,439" fill="none" stroke="#0b72c4" stroke-width="5" stroke-linejoin="round"/>
 <circle cx="1438" cy="665" r="5" fill="#1bd81b" stroke="#000" stroke-width="2"/>
 <circle cx="1604" cy="665" r="5" fill="#0b72c4" stroke="#000" stroke-width="2"/>
 <circle cx="1641" cy="439" r="5" fill="#0b72c4" stroke="#000" stroke-width="2"/>
 <circle cx="1775" cy="439" r="5" fill="#0b72c4" stroke="#000" stroke-width="2"/>
</svg>
<!-- spinner row 1 -->
<div class="a" style="left:1429px;top:681px;width:75px;height:30px;background:#fff;border:1px solid #8c8c8c;border-radius:0 7px 7px 0"></div>
<div class="a" style="left:1470px;top:682px;width:33px;height:28px;background:#f5f5f5;border-left:1px solid #8c8c8c;border-radius:0 6px 6px 0"></div>
<div class="a" style="left:1471px;top:696px;width:32px;height:1px;background:#d0d0d0"></div>
<svg style="left:1480px;top:685px" width="16" height="22"><polygon points="1,8 15,8 8,1" fill="#555"/><polygon points="3,14 13,14 8,19" fill="#bbb"/></svg>
<div class="t" style="left:1453px;top:687px;font-size:18px;color:#222">1</div>
<div class="t" style="left:1525px;top:687px;font-size:18px;color:#222">Intensity</div>
<div class="a" style="left:1598px;top:682px;width:89px;height:28px;background:#f3f3f3;border:1px solid #e0e0e0"></div>
<div class="t" style="left:1609px;top:687px;font-size:18px;color:#aaa">-3024.00</div>
<div class="t" style="left:1710px;top:687px;font-size:18px;color:#222">Opacity</div>
<div class="a" style="left:1776px;top:682px;width:10px;height:28px;background:#fff;border:1px solid #8c8c8c;border-right:none"></div>
<!-- h scroll 1 -->
<div class="a" style="left:1411px;top:724px;width:372px;height:24px;background:#f0f0f0"></div>
<svg style="left:1418px;top:729px" width="10" height="14"><polygon points="8,1 8,13 1,7" fill="#aaa"/></svg>
<div class="a" style="left:1436px;top:726px;width:282px;height:20px;background:#c2c2c2"></div>
<svg style="left:1766px;top:729px" width="10" height="14"><polygon points="1,1 1,13 8,7" fill="#222"/></svg>
<!-- apply to slices 1 -->
<div class="a" style="left:1400px;top:747px;width:174px;height:49px;border:3px solid #ee4444;box-shadow:1px 2px 4px rgba(0,0,0,0.35)"></div>
<div class="a" style="left:1411px;top:761px;width:20px;height:20px;background:#fff;border:1px solid #555"></div>
<div class="t" style="left:1435px;top:762px;font-size:18px;color:#222">Apply to slices</div>
<!-- colormap -->
<div class="t" style="left:1401px;top:815px;font-size:18px;font-weight:bold;color:#1a1a1a">Colormap</div>
<div class="a" style="left:1396px;top:838px;width:402px;height:1px;background:#8c8c8c"></div>
<div class="a" style="left:1439px;top:884px;width:320px;height:26px;background:linear-gradient(90deg,#000 0%,#2a0f12 18%,#6a2a30 40%,#a63a48 48%,#c87a70 52%,#e9d59a 60%,#f3e6bf 78%,#fffdf8 96%)"></div>
<svg style="left:1428px;top:885px" width="345" height="26" viewBox="1428 885 345 26">
 <circle cx="1439" cy="897.5" r="7.5" fill="#1bd81b" stroke="#000" stroke-width="2"/>
 <circle cx="1596" cy="897.5" r="7.5" fill="#0b6cc0" stroke="#000" stroke-width="2"/>
 <circle cx="1631" cy="897.5" r="7.5" fill="#0b6cc0" stroke="#000" stroke-width="2"/>
 <circle cx="1758" cy="897.5" r="7.5" fill="#0b6cc0" stroke="#000" stroke-width="2"/>
</svg>
<!-- spinner row 2 -->
<div class="a" style="left:1444px;top:929px;width:75px;height:30px;background:#fff;border:1px solid #8c8c8c;border-radius:0 7px 7px 0"></div>
<div class="a" style="left:1485px;top:930px;width:33px;height:28px;background:#f5f5f5;border-left:1px solid #8c8c8c;border-radius:0 6px 6px 0"></div>
<div class="a" style="left:1486px;top:944px;width:32px;height:1px;background:#d0d0d0"></div>
<svg style="left:1495px;top:933px" width="16" height="22"><polygon points="1,8 15,8 8,1" fill="#555"/><polygon points="3,14 13,14 8,19" fill="#bbb"/></svg>
<div class="t" style="left:1468px;top:935px;font-size:18px;color:#222">1</div>
<div class="t" style="left:1540px;top:935px;font-size:18px;color:#222">Intensity</div>
<div class="a" style="left:1613px;top:930px;width:89px;height:28px;background:#f3f3f3;border:1px solid #e0e0e0"></div>
<div class="t" style="left:1623px;top:935px;font-size:18px;color:#aaa">-3024.00</div>
<div class="t" style="left:1724px;top:935px;font-size:18px;color:#222">Color</div>
<!-- h scroll 2 -->
<div class="a" style="left:1426px;top:971px;width:342px;height:25px;background:#f0f0f0"></div>
<svg style="left:1433px;top:976px" width="10" height="14"><polygon points="8,1 8,13 1,7" fill="#aaa"/></svg>
<div class="a" style="left:1451px;top:973px;width:245px;height:21px;background:#c2c2c2"></div>
<svg style="left:1751px;top:976px" width="10" height="14"><polygon points="1,1 1,13 8,7" fill="#222"/></svg>
<!-- apply to slices 2 -->
<div class="a" style="left:1408px;top:995px;width:174px;height:49px;border:3px solid #ee4444;box-shadow:1px 2px 4px rgba(0,0,0,0.35)"></div>
<div class="a" style="left:1426px;top:1009px;width:20px;height:20px;background:#fff;border:1px solid #555"></div>
<div class="t" style="left:1451px;top:1010px;font-size:18px;color:#222">Apply to slices</div>
<!-- bottom h scroll -->
<div class="a" style="left:1381px;top:1052px;width:434px;height:24px;background:#f0f0f0"></div>
<svg style="left:1389px;top:1057px" width="10" height="14"><polygon points="8,1 8,13 1,7" fill="#aaa"/></svg>
<div class="a" style="left:1406px;top:1053px;width:364px;height:22px;background:#c2c2c2"></div>
<svg style="left:1798px;top:1057px" width="10" height="14"><polygon points="1,1 1,13 8,7" fill="#222"/></svg>
<div class="a" style="left:1815px;top:1052px;width:25px;height:24px;background:#ebebeb"></div>

<div class="a" style="left:110px;top:50px;width:405px;height:819px;background:#fff;border:1px solid #b8b8b8;border-bottom:2px solid #c4c4c4;box-shadow:1px 1px 3px rgba(0,0,0,0.25)"></div><div class="a" style="left:118px;top:56px;width:268px;height:33px;background:#fff;border:1.5px solid #1f7fd8"></div><div class="a" style="left:125px;top:61px;width:2px;height:23px;background:#111"></div><svg style="left:356px;top:60px" width="28" height="26"><circle cx="10.5" cy="9.5" r="8" fill="none" stroke="#666" stroke-width="1.7"/><line x1="16" y1="15.5" x2="24" y2="23" stroke="#666" stroke-width="2.4"/></svg><svg style="left:407px;top:66px" width="20" height="18"><rect x="0" y="0.5" width="18" height="1.7" fill="#222"/><rect x="0" y="5" width="18" height="1.7" fill="#222"/><rect x="0" y="9.5" width="18" height="1.7" fill="#222"/><rect x="0" y="14" width="18" height="1.7" fill="#222"/></svg><div class="a" style="left:435px;top:55px;width:32px;height:35px;background:#d9d9d9;border:1px solid #a0a0a0;border-radius:5px"></div><svg style="left:442px;top:65px" width="20" height="20"><g fill="none" stroke="#222" stroke-width="1.9"><rect x="1" y="1" width="6.5" height="6.5"/><rect x="11" y="1" width="6.5" height="6.5"/><rect x="1" y="11.5" width="6.5" height="6.5"/><rect x="11" y="11.5" width="6.5" height="6.5"/></g></svg><svg style="left:482px;top:65px" width="16" height="16"><g stroke="#7a7a7a" stroke-width="3"><line x1="2" y1="2" x2="14" y2="14"/><line x1="14" y1="2" x2="2" y2="14"/></g></svg><div class="a" style="left:111px;top:96px;width:403px;height:34px;background:#e6e6e6"></div><div class="t" style="left:118px;top:104px;font-size:16px;font-weight:bold;color:#1a1a1a">RENDERING PRESETS</div><svg style="left:481px;top:102px" width="17" height="20"><polygon points="1,1 15,1 8,8" fill="#999"/><polygon points="1,10 15,10 8,17" fill="#999"/></svg><div class="a" style="left:356px;top:137px;width:120px;height:95px;background:#d9d9d9;border:1px solid #9a9a9a;border-radius:6px"></div><svg style="left:158px;top:144px" width="35" height="35" viewBox="0 0 35 35">
<polygon points="1,9 17.5,1 34,9 17.5,17" fill="#dcdcdc" stroke="#666" stroke-width="1.4"/>
<polygon points="1,9 17.5,17 17.5,34 1,26" fill="#d0d0d0" stroke="#666" stroke-width="1.4"/>
<polygon points="17.5,17 34,9 34,26 17.5,34" fill="#cfcfcf" stroke="#666" stroke-width="1.4"/></svg><div class="t" style="left:116px;top:185px;width:120px;text-align:center;font-size:17px;color:#222">Linear</div><div class="t" style="left:116px;top:209px;width:120px;text-align:center;font-size:17px;color:#222">Grayscale</div><svg style="left:278px;top:144px" width="35" height="35" viewBox="0 0 35 35"><rect x="0.5" y="0.5" width="34" height="34" rx="2" fill="#595959"/><circle cx="28.0" cy="17.5" r="4.6" fill="#fff"/><circle cx="27.0" cy="22.5" r="4.6" fill="#fff"/><circle cx="24.0" cy="26.5" r="4.6" fill="#fff"/><circle cx="19.8" cy="28.7" r="4.6" fill="#fff"/><circle cx="15.2" cy="28.7" r="4.6" fill="#fff"/><circle cx="11.0" cy="26.5" r="4.6" fill="#fff"/><circle cx="8.0" cy="22.5" r="4.6" fill="#fff"/><circle cx="7.0" cy="17.5" r="4.6" fill="#fff"/><circle cx="8.0" cy="12.5" r="4.6" fill="#fff"/><circle cx="11.0" cy="8.5" r="4.6" fill="#fff"/><circle cx="15.2" cy="6.3" r="4.6" fill="#fff"/><circle cx="19.8" cy="6.3" r="4.6" fill="#fff"/><circle cx="24.0" cy="8.5" r="4.6" fill="#fff"/><circle cx="27.0" cy="12.5" r="4.6" fill="#fff"/><ellipse cx="17.5" cy="17.5" rx="11" ry="12" fill="#fff"/><circle cx="28.0" cy="17.5" r="3.4" fill="#9a2020"/><circle cx="27.0" cy="22.5" r="3.4" fill="#9a2020"/><circle cx="24.0" cy="26.5" r="3.4" fill="#9a2020"/><circle cx="19.8" cy="28.7" r="3.4" fill="#9a2020"/><circle cx="15.2" cy="28.7" r="3.4" fill="#9a2020"/><circle cx="11.0" cy="26.5" r="3.4" fill="#9a2020"/><circle cx="8.0" cy="22.5" r="3.4" fill="#9a2020"/><circle cx="7.0" cy="17.5" r="3.4" fill="#9a2020"/><circle cx="8.0" cy="12.5" r="3.4" fill="#9a2020"/><circle cx="11.0" cy="8.5" r="3.4" fill="#9a2020"/><circle cx="15.2" cy="6.3" r="3.4" fill="#9a2020"/><circle cx="19.8" cy="6.3" r="3.4" fill="#9a2020"/><circle cx="24.0" cy="8.5" r="3.4" fill="#9a2020"/><circle cx="27.0" cy="12.5" r="3.4" fill="#9a2020"/><ellipse cx="17.5" cy="17.5" rx="10.5" ry="11.5" fill="#9a2020"/><g stroke="#fff" stroke-width="1.3" fill="none" stroke-linecap="round"><path d="M17.5,6 L17.5,29"/><path d="M14,8 Q17.5,10 21,8"/><path d="M11,13 Q14,15 13,18 Q15,19 17.5,19.5 Q20,19 22,18 Q21,15 24,13"/><path d="M9.5,18 Q12,17.5 13,18 M25.5,18 Q23,17.5 22,18"/><path d="M13,27 L14,22 L11.5,21 M22,27 L21,22 L23.5,21"/></g></svg><div class="t" style="left:236px;top:185px;width:120px;text-align:center;font-size:17px;color:#222">MRI</div><svg style="left:398px;top:144px" width="35" height="35" viewBox="0 0 35 35"><rect x="0.5" y="0.5" width="34" height="34" rx="2" fill="#595959"/><g fill="#f4a0a0" stroke="#fff" stroke-width="0.8"><path d="M13,32 L13,24 L8,14 L9,13 L14,20 L13,6 L15,5 L16,18 L17,3 L19,3 L19,18 L21,5 L23,6 L21,19 L26,10 L28,11 L23,24 L22,32Z"/></g><g stroke="#fff" stroke-width="0.8"><line x1="12" y1="27" x2="23" y2="27"/><line x1="12" y1="24" x2="23" y2="24"/></g></svg><div class="t" style="left:356px;top:185px;width:120px;text-align:center;font-size:17px;color:#222">CT - Bone</div><svg style="left:158px;top:240px" width="35" height="35" viewBox="0 0 35 35"><rect x="0.5" y="0.5" width="34" height="34" rx="2" fill="#595959"/><g fill="#f4a0a0"><path d="M15,12 C9,10 4,18 3,30 L15,30 Z"/><path d="M20,12 C26,10 31,18 32,30 L20,30 Z"/></g><g stroke="#fff" stroke-width="1.2" fill="none"><path d="M17.5,2 L17.5,14 L12,20 M17.5,14 L23,20"/></g></svg><div class="t" style="left:116px;top:281px;width:120px;text-align:center;font-size:17px;color:#222">CT - Lung</div><svg style="left:278px;top:240px" width="35" height="35" viewBox="0 0 35 35"><rect x="0.5" y="0.5" width="34" height="34" rx="2" fill="#595959"/><path d="M5,30 C8,15 18,6 31,4 C28,18 18,28 5,30Z" fill="#8a1f1f" stroke="#fff" stroke-width="1.2"/><g stroke="#fff" stroke-width="1.8"><line x1="9" y1="26" x2="22" y2="9"/><line x1="14" y1="27" x2="28" y2="10"/></g></svg><div class="t" style="left:236px;top:281px;width:120px;text-align:center;font-size:17px;color:#222">CT - Soft</div><div class="t" style="left:236px;top:305px;width:120px;text-align:center;font-size:17px;color:#222">Tissue</div><svg style="left:398px;top:240px" width="35" height="35" viewBox="0 0 35 35"><rect x="0.5" y="0.5" width="34" height="34" rx="2" fill="#595959"/><path d="M9,16 C7,22 9,29 16,33 C24,31 27,24 26,17 C24,11 12,10 9,16Z" fill="#fff"/><g stroke="#f06a6a" stroke-width="1.1" fill="none"><path d="M13,12 C13,8 16,6 19,6.5 C22,7 25,9 28,10"/><path d="M15,7 L14,3 M18,6.5 L18,2.5 M21,7 L23,3.5"/><path d="M19,12 C16,17 18,23 14,28"/><path d="M20,13 C23,17 22,21 25,24"/></g></svg><div class="t" style="left:356px;top:281px;width:120px;text-align:center;font-size:17px;color:#222">CT -</div><div class="t" style="left:356px;top:305px;width:120px;text-align:center;font-size:17px;color:#222">Coronary</div><svg style="left:158px;top:336px" width="35" height="35" viewBox="0 0 35 35"><rect x="0.5" y="0.5" width="34" height="34" rx="2" fill="#595959"/><circle cx="28.0" cy="17.5" r="4" fill="none" stroke="#fff" stroke-width="1.1"/><circle cx="27.0" cy="22.5" r="4" fill="none" stroke="#fff" stroke-width="1.1"/><circle cx="24.0" cy="26.5" r="4" fill="none" stroke="#fff" stroke-width="1.1"/><circle cx="19.8" cy="28.7" r="4" fill="none" stroke="#fff" stroke-width="1.1"/><circle cx="15.2" cy="28.7" r="4" fill="none" stroke="#fff" stroke-width="1.1"/><circle cx="11.0" cy="26.5" r="4" fill="none" stroke="#fff" stroke-width="1.1"/><circle cx="8.0" cy="22.5" r="4" fill="none" stroke="#fff" stroke-width="1.1"/><circle cx="7.0" cy="17.5" r="4" fill="none" stroke="#fff" stroke-width="1.1"/><circle cx="8.0" cy="12.5" r="4" fill="none" stroke="#fff" stroke-width="1.1"/><circle cx="11.0" cy="8.5" r="4" fill="none" stroke="#fff" stroke-width="1.1"/><circle cx="15.2" cy="6.3" r="4" fill="none" stroke="#fff" stroke-width="1.1"/><circle cx="19.8" cy="6.3" r="4" fill="none" stroke="#fff" stroke-width="1.1"/><circle cx="24.0" cy="8.5" r="4" fill="none" stroke="#fff" stroke-width="1.1"/><circle cx="27.0" cy="12.5" r="4" fill="none" stroke="#fff" stroke-width="1.1"/><circle cx="28.0" cy="17.5" r="3.3" fill="#595959"/><circle cx="27.0" cy="22.5" r="3.3" fill="#595959"/><circle cx="24.0" cy="26.5" r="3.3" fill="#595959"/><circle cx="19.8" cy="28.7" r="3.3" fill="#595959"/><circle cx="15.2" cy="28.7" r="3.3" fill="#595959"/><circle cx="11.0" cy="26.5" r="3.3" fill="#595959"/><circle cx="8.0" cy="22.5" r="3.3" fill="#595959"/><circle cx="7.0" cy="17.5" r="3.3" fill="#595959"/><circle cx="8.0" cy="12.5" r="3.3" fill="#595959"/><circle cx="11.0" cy="8.5" r="3.3" fill="#595959"/><circle cx="15.2" cy="6.3" r="3.3" fill="#595959"/><circle cx="19.8" cy="6.3" r="3.3" fill="#595959"/><circle cx="24.0" cy="8.5" r="3.3" fill="#595959"/><circle cx="27.0" cy="12.5" r="3.3" fill="#595959"/><ellipse cx="17.5" cy="17.5" rx="10.5" ry="11.5" fill="#595959"/><g stroke="#fff" stroke-width="1.3" fill="none" stroke-linecap="round"><path d="M17.5,6 L17.5,29"/><path d="M14,8 Q17.5,10 21,8"/><path d="M11,13 Q14,15 13,18 Q15,19 17.5,19.5 Q20,19 22,18 Q21,15 24,13"/><path d="M9.5,18 Q12,17.5 13,18 M25.5,18 Q23,17.5 22,18"/><path d="M13,27 L14,22 L11.5,21 M22,27 L21,22 L23.5,21"/></g></svg><div class="t" style="left:116px;top:377px;width:120px;text-align:center;font-size:17px;color:#222">MRI - MIP</div><svg style="left:278px;top:336px" width="35" height="35" viewBox="0 0 35 35"><rect x="0.5" y="0.5" width="34" height="34" rx="2" fill="#595959"/><g stroke="#fff" stroke-width="1.3" fill="none" stroke-dasharray="3 1.5"><path d="M12,22 L7,12"/><path d="M14,20 L13,4"/><path d="M17.5,20 L17.5,2"/><path d="M21,20 L22,4"/><path d="M23,22 L28,10"/></g><rect x="12" y="24" width="11" height="3" fill="#fff"/><path d="M13,28 L13,33 M22,28 L22,33" stroke="#fff" stroke-width="2"/></svg><div class="t" style="left:236px;top:377px;width:120px;text-align:center;font-size:17px;color:#222">CT - MIP</div><svg style="left:398px;top:336px" width="35" height="35" viewBox="0 0 35 35"><rect x="0.5" y="0.5" width="34" height="34" rx="2" fill="#333"/><ellipse cx="17.5" cy="17.5" rx="13" ry="12" fill="#2ab0c0"/><ellipse cx="17.5" cy="17.5" rx="11.5" ry="10.5" fill="#7a2ad8"/><path d="M7,17 C8,9 14,7 19,9 C22,15 19,21 14,26 C9,24 7,21 7,17Z" fill="#e8a058"/><ellipse cx="20" cy="11" rx="5" ry="4" fill="#fff"/><circle cx="12" cy="18" r="2" fill="#7a2ad8"/></svg><div class="t" style="left:356px;top:377px;width:120px;text-align:center;font-size:17px;color:#222">PET</div><svg style="left:158px;top:432px" width="35" height="35" viewBox="0 0 35 35"><rect x="0.5" y="0.5" width="34" height="34" rx="2" fill="#333"/><g fill="#e86010"><path d="M14,9 C8,10 4,16 5,21 L12,20 C9,18 10,14 15,13Z"/><path d="M20,7 C27,10 31,17 29,24 C27,29 21,30 15,28 C19,24 18,20 22,16 Z"/></g><g fill="#ffd040"><path d="M13,11 C9,13 7,16 8,19 L11,18 Z"/><path d="M22,11 C26,14 27,20 25,24 C22,26 20,26 18,25 C21,22 21,19 23,16Z"/></g></svg><div class="t" style="left:116px;top:473px;width:120px;text-align:center;font-size:17px;color:#222">Hot Iron</div><svg style="left:278px;top:432px" width="35" height="35" viewBox="0 0 35 35"><rect x="0.5" y="0.5" width="34" height="34" rx="2" fill="#333"/><ellipse cx="17.5" cy="17.5" rx="13" ry="12" fill="#3a70e0"/><ellipse cx="17.5" cy="17.5" rx="11" ry="10" fill="#80a8f0"/><path d="M7,17 C9,10 13,9 17,12 C18,18 16,22 19,25 C23,26 26,22 28,20 C28,25 23,29 14,27 C9,25 7,21 7,17Z" fill="#f0a050"/><ellipse cx="19" cy="11" rx="5" ry="5" fill="#fff"/><circle cx="18" cy="15" r="2" fill="#3a70e0"/></svg><div class="t" style="left:236px;top:473px;width:120px;text-align:center;font-size:17px;color:#222">Hot Metal</div><div class="t" style="left:236px;top:497px;width:120px;text-align:center;font-size:17px;color:#222">Blue</div><svg style="left:398px;top:432px" width="35" height="35" viewBox="0 0 35 35"><rect x="0.5" y="0.5" width="34" height="34" rx="2" fill="#333"/><ellipse cx="17.5" cy="17.5" rx="13" ry="13" fill="#e030e0"/><ellipse cx="17.5" cy="17.5" rx="11.5" ry="11.5" fill="#3ad03a"/><ellipse cx="17.5" cy="17.5" rx="9.5" ry="10" fill="#f0e050"/><ellipse cx="17.5" cy="18" rx="7.5" ry="8" fill="#f06040"/><ellipse cx="17.5" cy="18" rx="5" ry="6" fill="#f0c060"/><circle cx="14" cy="15" r="2" fill="#e03030"/><circle cx="21" cy="15" r="2" fill="#e03030"/><rect x="15" y="22" width="5" height="3" fill="#fff"/></svg><div class="t" style="left:356px;top:473px;width:120px;text-align:center;font-size:17px;color:#222">PET - 20 Step</div><svg style="left:158px;top:528px" width="35" height="35" viewBox="0 0 35 35" opacity="0.45">
<polygon points="1,9 17.5,1 34,9 17.5,17" fill="#e8e8e8" stroke="#777" stroke-width="1.3"/>
<polygon points="17.5,1 34,9 17.5,17" fill="#f5e8b0" stroke="#777" stroke-width="1.3"/>
<polygon points="1,9 17.5,17 17.5,34 1,26" fill="#e0e0e0" stroke="#777" stroke-width="1.3"/>
<polygon points="17.5,17 34,9 34,26 17.5,34" fill="#d8f5d0" stroke="#3a9a3a" stroke-width="1.5"/></svg><div class="t" style="left:116px;top:569px;width:120px;text-align:center;font-size:17px;color:#b0b0b0">Custom</div><div class="a" style="left:111px;top:625px;width:403px;height:35px;background:#e6e6e6"></div><div class="t" style="left:118px;top:634px;font-size:16px;font-weight:bold;color:#1a1a1a">USER DEFINED</div><svg style="left:481px;top:632px" width="17" height="20"><polygon points="1,8 15,8 8,1" fill="#999"/><polygon points="1,17 15,17 8,10" fill="#999"/></svg><svg style="left:158px;top:673px" width="35" height="35" viewBox="0 0 35 35">
<polygon points="1,9 17.5,1 34,9 17.5,17" fill="#d4d4d4" stroke="#666" stroke-width="1.4"/>
<polygon points="17.5,1 34,9 17.5,17" fill="#fbe27a" stroke="#666" stroke-width="1.4"/>
<polygon points="1,9 17.5,17 17.5,34 1,26" fill="#d0d0d0" stroke="#666" stroke-width="1.4"/>
<polygon points="17.5,17 34,9 34,26 17.5,34" fill="#c8f7c0" stroke="#1a8a1a" stroke-width="1.8"/></svg><div class="t" style="left:116px;top:714px;width:120px;text-align:center;font-size:17px;color:#222">CT_bone_ri...</div><svg style="left:278px;top:673px" width="35" height="35" viewBox="0 0 35 35">
<polygon points="1,9 17.5,1 34,9 17.5,17" fill="#d4d4d4" stroke="#666" stroke-width="1.4"/>
<polygon points="17.5,1 34,9 17.5,17" fill="#fbe27a" stroke="#666" stroke-width="1.4"/>
<polygon points="1,9 17.5,17 17.5,34 1,26" fill="#d0d0d0" stroke="#666" stroke-width="1.4"/>
<polygon points="17.5,17 34,9 34,26 17.5,34" fill="#c8f7c0" stroke="#1a8a1a" stroke-width="1.8"/></svg><svg style="left:398px;top:673px" width="35" height="35" viewBox="0 0 35 35">
<polygon points="1,9 17.5,1 34,9 17.5,17" fill="#d4d4d4" stroke="#666" stroke-width="1.4"/>
<polygon points="17.5,1 34,9 17.5,17" fill="#fbe27a" stroke="#666" stroke-width="1.4"/>
<polygon points="1,9 17.5,17 17.5,34 1,26" fill="#d0d0d0" stroke="#666" stroke-width="1.4"/>
<polygon points="17.5,17 34,9 34,26 17.5,34" fill="#c8f7c0" stroke="#1a8a1a" stroke-width="1.8"/></svg><div class="t" style="left:356px;top:714px;width:120px;text-align:center;font-size:17px;color:#222">CT_lungcut...</div><svg style="left:158px;top:769px" width="35" height="35" viewBox="0 0 35 35">
<polygon points="1,9 17.5,1 34,9 17.5,17" fill="#d4d4d4" stroke="#666" stroke-width="1.4"/>
<polygon points="17.5,1 34,9 17.5,17" fill="#fbe27a" stroke="#666" stroke-width="1.4"/>
<polygon points="1,9 17.5,17 17.5,34 1,26" fill="#d0d0d0" stroke="#666" stroke-width="1.4"/>
<polygon points="17.5,17 34,9 34,26 17.5,34" fill="#c8f7c0" stroke="#1a8a1a" stroke-width="1.8"/></svg><div class="t" style="left:116px;top:810px;width:120px;text-align:center;font-size:17px;color:#222">lung_ct_vol...</div><svg style="left:278px;top:769px" width="35" height="35" viewBox="0 0 35 35">
<polygon points="1,9 17.5,1 34,9 17.5,17" fill="#d4d4d4" stroke="#666" stroke-width="1.4"/>
<polygon points="17.5,1 34,9 17.5,17" fill="#fbe27a" stroke="#666" stroke-width="1.4"/>
<polygon points="1,9 17.5,17 17.5,34 1,26" fill="#d0d0d0" stroke="#666" stroke-width="1.4"/>
<polygon points="17.5,17 34,9 34,26 17.5,34" fill="#c8f7c0" stroke="#1a8a1a" stroke-width="1.8"/></svg><div class="t" style="left:236px;top:810px;width:120px;text-align:center;font-size:17px;color:#222"><span style="letter-spacing:-0.6px">CT_PET_Dat...</span></div><svg style="left:0;top:0" width="1840" height="1112"><defs><filter id="sh" x="-20%" y="-20%" width="140%" height="140%"><feDropShadow dx="1" dy="2" stdDeviation="2" flood-opacity="0.35"/></filter></defs><g filter="url(#sh)"><line x1="561" y1="254" x2="482" y2="210" stroke="#ee4444" stroke-width="4.5"/><polygon points="473,204 490.5,205 485,210 482,218" fill="#ee4444"/></g><rect x="559.5" y="253.5" width="145" height="83" rx="4" fill="#fff" stroke="#ee4444" stroke-width="3.5" filter="url(#sh)"/></svg><div class="t" style="left:560px;top:258px;width:144px;text-align:center;font-size:20px;line-height:24px;color:#111">Select<br>Rendering<br>Preset</div>

<!-- 3D content -->
<svg style="left:920px;top:664px" width="459" height="414" viewBox="920 664 459 414">
 <defs>
  <filter id="vb" x="-10%" y="-10%" width="120%" height="120%"><feGaussianBlur stdDeviation="1.2"/></filter>
  <filter id="vb3" x="-10%" y="-10%" width="120%" height="120%"><feGaussianBlur stdDeviation="2"/></filter>
  <linearGradient id="redg" x1="0" y1="0" x2="0.3" y2="1"><stop offset="0" stop-color="#ad4b46"/><stop offset="0.5" stop-color="#a84944"/><stop offset="1" stop-color="#8e3c39"/></linearGradient>
  <linearGradient id="plg" x1="0" y1="0" x2="1" y2="0"><stop offset="0" stop-color="#c98a6c"/><stop offset="0.6" stop-color="#cf9070"/><stop offset="1" stop-color="#c08068"/></linearGradient>
 </defs>
 <g filter="url(#vb3)">
 <path d="M1056,815 C1065,805 1078,797 1088,795 C1110,780 1130,762 1151,754 C1175,748 1195,744 1208,743 C1225,744 1240,746 1252,752 C1258,770 1260,785 1262,800 L1262,990 L1211,1016 C1180,1012 1155,1010 1136,1008 C1120,1002 1108,998 1102,993 C1085,982 1072,972 1064,959 C1058,940 1055,925 1054,921 C1052,880 1054,840 1056,815Z" fill="url(#redg)"/>
 <ellipse cx="1108" cy="770" rx="20" ry="11" fill="#7a2e2c"/>
 </g>
 <g filter="url(#vb)" fill="#e8c898" opacity="0.85">
  <ellipse cx="1108" cy="768" rx="12" ry="5" transform="rotate(-15 1108 768)"/>
  <path d="M1082,826 C1090,822 1100,830 1110,838 C1115,848 1125,858 1135,865 L1130,870 C1118,860 1108,850 1100,842 C1092,836 1086,834 1080,830Z"/>
  <path d="M1115,820 C1135,812 1150,806 1165,800 C1175,790 1185,785 1200,778 L1203,783 C1190,790 1180,798 1170,806 C1155,814 1135,822 1118,826Z"/>
  <path d="M1155,786 C1162,778 1168,772 1172,765 L1177,768 C1172,777 1165,784 1158,790Z"/>
  <path d="M1196,770 C1200,790 1198,815 1190,845 L1186,844 C1193,815 1195,790 1192,772Z"/>
  <path d="M1215,778 C1230,772 1240,782 1248,800 L1252,830 L1247,832 C1243,810 1236,790 1222,784Z"/>
  <circle cx="1196" cy="757" r="3.5" fill="#fff"/>
  <path d="M1066,948 C1085,935 1105,925 1136,915 L1136,921 C1108,930 1088,940 1068,953Z"/>
  <path d="M1077,968 C1095,955 1115,945 1136,938 L1136,944 C1118,951 1098,961 1079,973Z"/>
  <path d="M1092,985 C1105,976 1120,968 1136,962 L1136,968 C1122,974 1108,981 1094,990Z"/>
  <path d="M1108,902 C1118,896 1126,893 1136,890 L1136,895 C1126,898 1118,902 1110,906Z"/>
 </g>
 <polygon points="1211,1016 1263,970 1263,940 1211,960" fill="#8a4a44" opacity="0.9" filter="url(#vb)"/>
 <polygon points="1136.5,864 1279,793 1279,950 1136.5,1025" fill="url(#plg)" opacity="0.92" filter="url(#vb)"/>
 <g stroke="#dba080" stroke-width="2" opacity="0.45" fill="none">
  <path d="M1145,900 L1272,842 M1145,925 L1272,866 M1145,952 L1272,892 M1145,978 L1272,916"/>
 </g>
 <!-- axes -->
 <line x1="995" y1="1005" x2="995" y2="943" stroke="#3a70c0" stroke-width="2.2"/>
 <line x1="995" y1="1005" x2="943" y2="1034" stroke="#c04040" stroke-width="2.2"/>
 <line x1="995" y1="1005" x2="1048" y2="1034" stroke="#2a9a3a" stroke-width="2.2"/>
 <text x="995" y="935" font-size="17" fill="#3a70c0" text-anchor="middle" font-family="Liberation Sans">S</text>
 <text x="942" y="1026" font-size="17" fill="#c04040" text-anchor="middle" font-family="Liberation Sans">L</text>
 <text x="1048" y="1026" font-size="17" fill="#2a9a3a" text-anchor="middle" font-family="Liberation Sans">P</text>
</svg>
<div class="a" style="left:1204px;top:1028px;width:165px;height:43px;background:rgba(15,15,15,0.85);border-radius:8px"></div>
<div class="a" style="left:1257px;top:1035px;width:59px;height:5px;background:#e6e6e6"></div>
<div class="t" style="left:1204px;top:1045px;width:165px;text-align:center;font-size:20px;color:#fff">100 mm</div>
<div class="a" style="left:1216px;top:675px;width:153px;height:45px;background:rgba(25,25,25,0.85);border-radius:8px"></div><svg style="left:1222px;top:682px" width="144" height="31"><g transform="translate(0,0)"><g fill="none" stroke="#a0a0a0" stroke-width="1.7"><path d="M24,4.5 A13,13 0 1 0 28.5,11"/><polygon points="21,1 28.5,2.5 24.5,8.5" fill="#a0a0a0" stroke="none"/><polygon points="15,9 21,12.5 15,16 9,12.5"/><polyline points="9,12.5 9,19.5 15,23 21,19.5 21,12.5"/><line x1="15" y1="16" x2="15" y2="23"/></g></g><g transform="translate(36,0)"><path d="M10,29.6 L24.8,29.6 L29.3,8.5 Q29,5.5 27,5.5 Q25,5.5 24.7,8 L24,13.5 L23.5,5 Q23.2,2.5 21.3,2.5 Q19.3,2.5 19.1,5 L18.8,12.5 L17.5,3 Q17.3,0.5 15.3,0.5 Q13.3,0.5 13.2,3 L13,12.5 L12,5 Q11.8,2.8 9.9,2.8 Q8,2.8 8,5 L8.5,16.5 L4.5,12.8 Q2.5,11.5 1,12.8 Q0,14 1,15.5 Z" fill="none" stroke="#a0a0a0" stroke-width="1.6" stroke-linejoin="round"/></g><g transform="translate(72,0)"><circle cx="12" cy="12" r="11.8" fill="none" stroke="#a0a0a0" stroke-width="1.7"/><line x1="20.5" y1="20.5" x2="29" y2="28.8" stroke="#a0a0a0" stroke-width="3" stroke-linecap="round"/></g><g transform="translate(108,0)"><polyline points="0.5,15.5 15,0.5 30,15.5" fill="none" stroke="#a0a0a0" stroke-width="1.7"/><polyline points="4.5,14.7 4.5,28.5 11,28.5 11,19.2 19.5,19.2 19.5,28.5 25.7,28.5 25.7,14.7" fill="none" stroke="#a0a0a0" stroke-width="1.7"/><polygon points="21.5,1.6 26.5,1.6 26.5,5.8" fill="#a0a0a0"/></g></svg>
<svg style="left:493px;top:78px" width="22" height="30"><polygon points="1,1 1,20.5 5.5,16.5 10,26 13.5,24.5 9.5,15.5 17.5,15.5" fill="#fff" stroke="#000" stroke-width="1.2" stroke-linejoin="miter"/></svg>
</body></html>
